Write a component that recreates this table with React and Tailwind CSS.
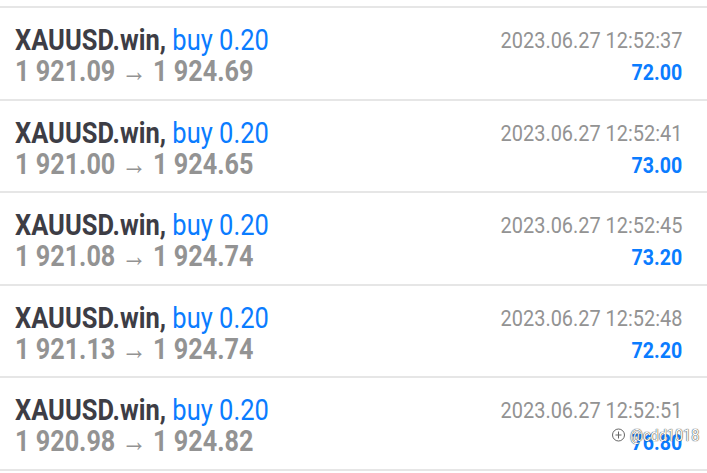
import React from "react";

// Trade history rows
const trades = [
  { open: "1 921.09", close: "1 924.69", time: "2023.06.27 12:52:37", profit: "72.00" },
  { open: "1 921.00", close: "1 924.65", time: "2023.06.27 12:52:41", profit: "73.00" },
  { open: "1 921.08", close: "1 924.74", time: "2023.06.27 12:52:45", profit: "73.20" },
  { open: "1 921.13", close: "1 924.74", time: "2023.06.27 12:52:48", profit: "72.20" },
  { open: "1 920.98", close: "1 924.82", time: "2023.06.27 12:52:51", profit: "76.80" },
];

function TradeRow({ trade }) {
  return (
    <div className="flex h-[92.5px] items-start justify-between border-t-2 border-[#e6e6e6] pl-[15px] pr-[25px]">
      <div className="flex flex-col pt-[16px]">
        <div className="origin-left scale-x-[0.85] whitespace-nowrap text-[30px] leading-[31px]">
          <span className="font-bold text-[#3d3d45]">XAUUSD.win, </span>
          <span className="text-[#0a7cff]">buy 0.20</span>
        </div>
        <div className="origin-left scale-x-[0.84] whitespace-nowrap text-[30px] font-bold leading-[31px] text-[#939393]">
          {trade.open} <span className="font-normal">→</span> {trade.close}
        </div>
      </div>
      <div className="flex flex-col items-end pt-[18px]">
        <div className="origin-right scale-x-[0.885] whitespace-nowrap text-[22.5px] leading-[28px] text-[#939393]">{trade.time}</div>
        <div className="mt-[4px] origin-right scale-x-[0.87] text-[22.5px] font-bold leading-[28px] text-[#0a7cff]">{trade.profit}</div>
      </div>
    </div>
  );
}

export default function App() {
  return (
    <div className="relative h-[473px] w-[707px] overflow-hidden bg-white pt-[6px]" style={{ fontFamily: "Roboto, 'Noto Sans', sans-serif" }}>
      {trades.map((t, i) => (
        <TradeRow key={i} trade={t} />
      ))}
      <div className="border-t-2 border-[#e6e6e6]" />
      {/* watermark */}
      <div className="absolute left-[611px] top-[425px] flex items-center gap-[4px] text-[17px] leading-[20px] text-white [text-shadow:0_0_1px_#333,0_0_1px_#333]">
        <svg width="15" height="16" viewBox="0 0 15 16" fill="none" stroke="#666" strokeWidth="1">
          <circle cx="7.5" cy="8" r="6" fill="white" />
          <path d="M7.5 4.5 v7 M4.5 8 h6" />
        </svg>
        <span className="origin-left scale-x-[0.85]">@cdd1018</span>
      </div>
    </div>
  );
}
